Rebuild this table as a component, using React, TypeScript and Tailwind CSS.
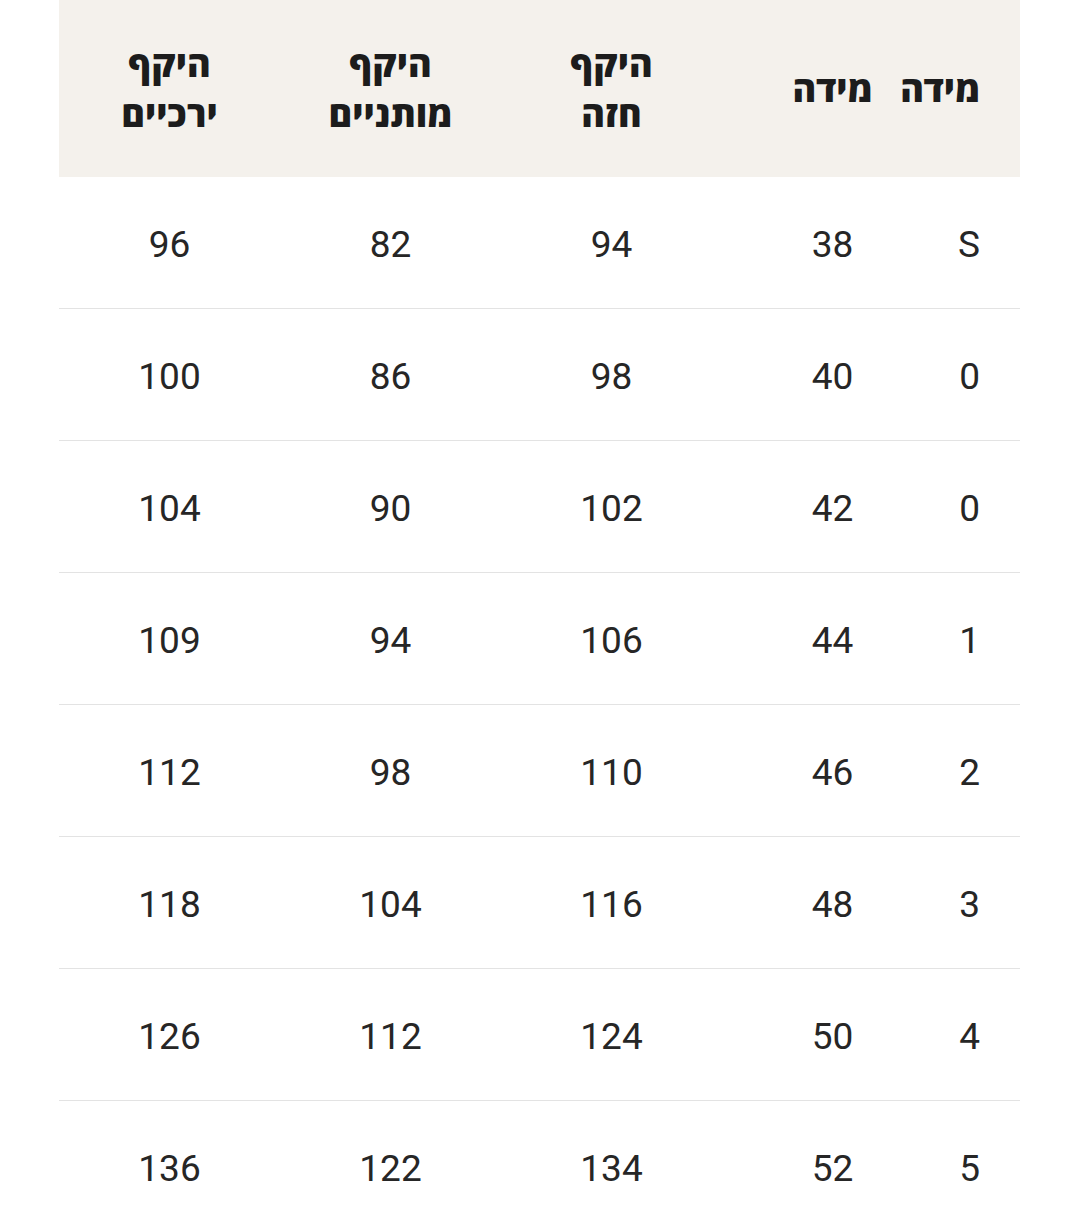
import React from "react";

const rows = [
  ["S", "38", "94", "82", "96"],
  ["0", "40", "98", "86", "100"],
  ["0", "42", "102", "90", "104"],
  ["1", "44", "106", "94", "109"],
  ["2", "46", "110", "98", "112"],
  ["3", "48", "116", "104", "118"],
  ["4", "50", "124", "112", "126"],
  ["5", "52", "134", "122", "136"],
];

const headers: string[][] = [
  ["מידה"],
  ["מידה"],
  ["היקף", "חזה"],
  ["היקף", "מותניים"],
  ["היקף", "ירכיים"],
];

export default function App() {
  return (
    <div className="w-[1080px] min-h-[1224px] bg-white overflow-hidden">
      <div dir="rtl" className="ml-[59px] w-[961px]">
        <div
          className="grid grid-cols-[77px_221px_221px_221px_221px] h-[177px] bg-[#f4f1ec] text-[#1c1c1c]"
          style={{ fontFamily: '"Open Sans", "DejaVu Sans", sans-serif' }}
        >
          {headers.map((h, i) => (
            <div
              key={i}
              className={`flex flex-col justify-center font-extrabold text-[36px] leading-[50px] whitespace-nowrap ${
                i === 0 ? "items-start pr-[40px]" : "items-center"
              }`}
            >
              {h.map((l, j) => (
                <span key={j}>{l}</span>
              ))}
            </div>
          ))}
        </div>
        {rows.map((r, ri) => (
          <div
            key={ri}
            className={`grid grid-cols-[77px_221px_221px_221px_221px] h-[132px] text-[#262626] ${
              ri < rows.length - 1 ? "border-b border-[#e3e3e3]" : ""
            }`}
            style={{ fontFamily: 'Roboto, "Open Sans", sans-serif' }}
          >
            {r.map((c, ci) => (
              <div
                key={ci}
                className={`flex items-center pt-[4px] font-normal text-[37px] whitespace-nowrap ${
                  ci === 0 ? "justify-start pr-[40px]" : "justify-center"
                }`}
              >
                {c}
              </div>
            ))}
          </div>
        ))}
      </div>
    </div>
  );
}
